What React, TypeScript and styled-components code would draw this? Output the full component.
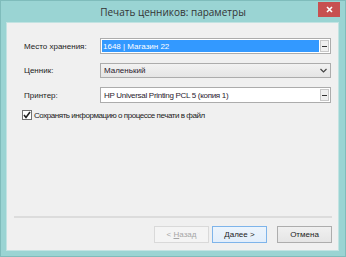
import React from 'react';
import styled, { createGlobalStyle, css } from 'styled-components';

const GlobalStyle = createGlobalStyle`
  html, body {
    margin: 0;
    padding: 0;
    background: #9ad4d3;
  }
  * {
    box-sizing: border-box;
  }
`;

const Window = styled.div`
  width: 346px;
  height: 257px;
  display: flex;
  flex-direction: column;
  background: #9ad4d3;
  border: 1px solid #7fbcbb;
  font-family: 'Liberation Sans', Arial, sans-serif;
  font-size: 8px;
  color: #222;
`;

const TitleBar = styled.div`
  height: 21px;
  display: grid;
  grid-template-columns: 1fr auto 1fr;
  align-items: start;
`;

const Title = styled.div`
  grid-column: 2;
  padding-top: 4px;
  font-family: 'Open Sans', 'Noto Sans', sans-serif;
  font-size: 10px;
  color: #333;
  white-space: nowrap;
`;

const CloseButton = styled.div`
  grid-column: 3;
  justify-self: end;
  margin: 1px 5px 0 0;
  width: 22px;
  height: 15px;
  background: #c75050;
  display: flex;
  align-items: center;
  justify-content: center;
`;

const Client = styled.div`
  flex: 1;
  margin: 0 6px 5px 5px;
  background: #f0f0f0;
  border: 1px solid #c2e3e2;
  display: flex;
  flex-direction: column;
  padding: 15px 6px 7px 7px;
`;

const Form = styled.div`
  display: grid;
  grid-template-columns: 76px 1fr;
  row-gap: 9px;
  padding: 0 1px 0 10px;
  align-items: center;
`;

const Label = styled.div`
  white-space: nowrap;
`;

const Field = styled.div<{ $variant: 'selected' | 'combo' | 'plain' }>`
  height: 16px;
  display: flex;
  align-items: stretch;
  border: 1px solid #acacac;
  ${(p) =>
    p.$variant === 'combo'
      ? css`
          background: linear-gradient(#f2f2f2, #e5e5e5);
          height: 15px;
        `
      : css`
          background: #fff;
        `}
`;

const FieldText = styled.div<{ $selected?: boolean; $tight?: boolean }>`
  flex: 1;
  display: flex;
  align-items: center;
  padding-left: 3px;
  white-space: nowrap;
  overflow: hidden;
  color: #2a1a2e;
  letter-spacing: ${(p) => (p.$tight ? '-0.3px' : '0')};
  ${(p) =>
    p.$selected &&
    css`
      background: #3399ff;
      color: #fff;
      margin: 1px 0 1px 1px;
      padding-left: 1px;
    `}
`;

const EllipsisButton = styled.div`
  width: 9px;
  margin: 1px;
  background: #f0f0f0;
  border: 1px solid #c8c8c8;
  display: flex;
  align-items: center;
  justify-content: center;
  &::after {
    content: '';
    width: 5px;
    height: 1px;
    background: #333;
  }
`;

const Chevron = styled.div`
  width: 14px;
  display: flex;
  align-items: center;
  justify-content: center;
`;

const CheckRow = styled.label`
  display: flex;
  align-items: center;
  gap: 2px;
  margin: 7px 0 0 8px;
  letter-spacing: -0.45px;
`;

const CheckBox = styled.div`
  width: 10px;
  height: 10px;
  border: 1px solid #707070;
  background: #fff;
  display: flex;
  align-items: center;
  justify-content: center;
`;

const Spacer = styled.div`
  flex: 1;
`;

const Separator = styled.div`
  height: 2px;
  background: #dcdcdc;
  margin: 0 0 8px 0;
`;

const Buttons = styled.div`
  display: flex;
  justify-content: flex-end;
  gap: 3px;
`;

const Button = styled.div<{ $disabled?: boolean; $default?: boolean; $gap?: number }>`
  width: 55px;
  height: 17px;
  display: flex;
  align-items: center;
  justify-content: center;
  border: 1px solid #adadad;
  background: linear-gradient(#f0f0f0, #e5e5e5);
  margin-left: ${(p) => p.$gap ?? 0}px;
  ${(p) =>
    p.$disabled &&
    css`
      border-color: #d9d9d9;
      background: #f4f4f4;
      color: #a6a6a6;
    `}
  ${(p) =>
    p.$default &&
    css`
      border-color: #7eb4ea;
      background: linear-gradient(#ecf4fc, #e2eefb);
    `}
`;

const Underline = styled.span`
  text-decoration: underline;
`;

export default function App() {
  return (
    <>
      <GlobalStyle />
      <Window>
        <TitleBar>
          <Title>Печать ценников: параметры</Title>
          <CloseButton>
            <svg width="7" height="7" viewBox="0 0 7 7">
              <path d="M1 1 L6 6 M6 1 L1 6" stroke="#fff" strokeWidth="1.6" />
            </svg>
          </CloseButton>
        </TitleBar>
        <Client>
          <Form>
            <Label>Место хранения:</Label>
            <Field $variant="selected">
              <FieldText $selected>1648 | Магазин 22</FieldText>
              <EllipsisButton />
            </Field>
            <Label>Ценник:</Label>
            <Field $variant="combo">
              <FieldText>Маленький</FieldText>
              <Chevron>
                <svg width="7" height="5" viewBox="0 0 7 5">
                  <polyline points="0.5,1 3.5,4 6.5,1" fill="none" stroke="#444" strokeWidth="1.2" />
                </svg>
              </Chevron>
            </Field>
            <Label>Принтер:</Label>
            <Field $variant="plain">
              <FieldText $tight>HP Universal Printing PCL 5 (копия 1)</FieldText>
              <EllipsisButton />
            </Field>
          </Form>
          <CheckRow>
            <CheckBox>
              <svg width="8" height="8" viewBox="0 0 8 8">
                <polyline points="1,4 3,6.5 7,1" fill="none" stroke="#222" strokeWidth="1.6" />
              </svg>
            </CheckBox>
            Сохранять информацию о процессе печати в файл
          </CheckRow>
          <Spacer />
          <Separator />
          <Buttons>
            <Button $disabled>
              &lt;&nbsp;<Underline>Н</Underline>азад
            </Button>
            <Button $default>
              <Underline>Д</Underline>алее &gt;
            </Button>
            <Button $gap={7}>Отмена</Button>
          </Buttons>
        </Client>
      </Window>
    </>
  );
}
